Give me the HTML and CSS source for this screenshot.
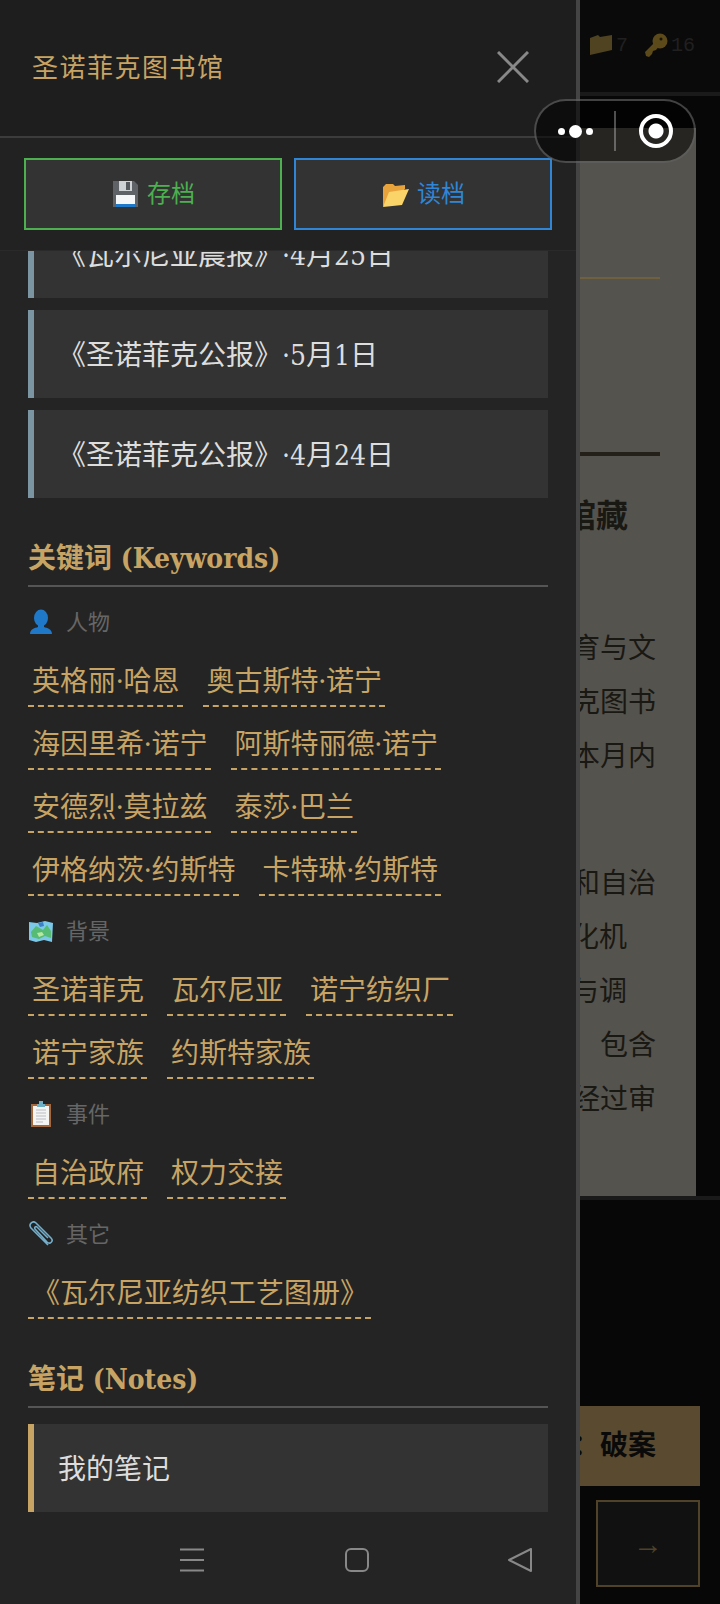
FILE: index.html
```html
<!DOCTYPE html>
<html lang="zh-CN">
<head>
  <meta charset="UTF-8" />
  <meta name="viewport" content="width=device-width, initial-scale=1" />
  <title>圣诺菲克图书馆</title>
  <link rel="stylesheet" href="styles.css">
</head>
<body>

<!-- Page behind the drawer, dimmed -->
<div class="game">
  <div class="topbar">
    <svg class="stat-icon" width="24" height="22" viewBox="0 0 24 22"><path d="M1 4l8-3 2 2 12-2v15L1 21z" fill="#4f4322"/></svg>
    <span class="stat">7</span>
    <svg class="stat-icon stat-key" width="24" height="24" viewBox="0 0 24 24"><circle cx="16" cy="8" r="7.5" fill="#5c4a1a"/><path d="M11 9L1 19l1 4 3 1 3-3 1-3 3-1 4-5z" fill="#5c4a1a"/><circle cx="17" cy="6" r="1.5" fill="#1a1508"/></svg>
    <span class="stat">16</span>
  </div>
  <div class="paper">
    <div class="rule rule-thin"></div>
    <div class="rule rule-thick"></div>
    <h2 class="paper-title">图书馆馆藏</h2>
    <div class="paper-block">
      <div class="line">育与文</div>
      <div class="line">克图书</div>
      <div class="line">本月内</div>
    </div>
    <div class="paper-block paper-block-second">
      <div class="line">和自治</div>
      <div class="line line-short">化机</div>
      <div class="line line-short">与调</div>
      <div class="line">包含</div>
      <div class="line">经过审</div>
    </div>
  </div>
  <div class="game-footer">
    <button class="solve-btn">线索：破案</button>
    <button class="next-btn">→</button>
  </div>
</div>

<aside class="drawer">
  <header class="drawer-head">
    <span class="drawer-title">圣诺菲克图书馆</span>
    <svg class="drawer-close" width="32" height="32" viewBox="0 0 32 32"><path d="M1 1l30 30M31 1L1 31" stroke="#888" stroke-width="3" fill="none"/></svg>
  </header>

  <div class="save-bar">
    <button class="save-btn save-btn-green">
      <svg width="28" height="28" viewBox="0 0 28 28"><path d="M2 1h21l4 4v22H2z" fill="#5f6368"/><path d="M8 1h13v10H8z" fill="#cfd2d5"/><path d="M15 2h4v8h-4z" fill="#55595e"/><path d="M5 15h19v12H5z" fill="#f5f6f7"/><path d="M5 24h19v3H5z" fill="#1f78c8"/></svg>
      <span class="save-label">存档</span>
    </button>
    <button class="save-btn save-btn-blue">
      <svg width="28" height="28" viewBox="0 0 28 28"><path d="M2 7l3-3h7l2 2 10-1v4L5 25l-3 1z" fill="#e8a33d"/><path d="M8 12l20-3-7 16-19 2z" fill="#fbd469"/></svg>
      <span class="save-label">读档</span>
    </button>
  </div>

  <div class="drawer-scroll">
    <div class="drawer-inner">
      <div class="entry">《瓦尔尼亚晨报》·4月25日</div>
      <div class="entry">《圣诺菲克公报》·5月1日</div>
      <div class="entry">《圣诺菲克公报》·4月24日</div>

      <h3 class="section-title">关键词 (Keywords)</h3>

      <div class="cat">
        <svg width="26" height="26" viewBox="0 0 26 26"><ellipse cx="13" cy="9" rx="7" ry="8.5" fill="#1f78c8"/><path d="M2 25c0-5 5-6 8-7v-3h6v3c3 1 8 2 8 7z" fill="#1f78c8"/></svg>
        <span>人物</span>
      </div>
      <div class="tags">
        <a class="tag">英格丽·哈恩</a>
        <a class="tag">奥古斯特·诺宁</a>
        <a class="tag">海因里希·诺宁</a>
        <a class="tag">阿斯特丽德·诺宁</a>
        <a class="tag">安德烈·莫拉兹</a>
        <a class="tag">泰莎·巴兰</a>
        <a class="tag">伊格纳茨·约斯特</a>
        <a class="tag">卡特琳·约斯特</a>
      </div>

      <div class="cat">
        <svg width="26" height="26" viewBox="0 0 26 26"><path d="M1 4l8 1 8-2 8 2-1 19-8-2-8 2-7-2z" fill="#7cc8e8"/><path d="M3 14l5-6 7 4 4-5 4 6v7l-6-2-6 3-7-2z" fill="#55bb75"/><path d="M10 5l5-1 1 4-4 1z" fill="#3d7fc4"/><path d="M9 15l5-1 2 3-5 2z" fill="#b9e6a0"/></svg>
        <span>背景</span>
      </div>
      <div class="tags">
        <a class="tag">圣诺菲克</a>
        <a class="tag">瓦尔尼亚</a>
        <a class="tag">诺宁纺织厂</a>
        <a class="tag">诺宁家族</a>
        <a class="tag">约斯特家族</a>
      </div>

      <div class="cat">
        <svg width="26" height="26" viewBox="0 0 26 26"><path d="M3 3h20v23H3z" fill="#a5683c"/><path d="M5 5h16v19H5z" fill="#f4f4f2"/><path d="M8 9h10M8 12h10M8 15h10M8 18h10M8 21h7" stroke="#b8bcc4" stroke-width="1"/><path d="M9 3h8v3H9zM11 0h4v3h-4z" fill="#6fb0c4"/></svg>
        <span>事件</span>
      </div>
      <div class="tags">
        <a class="tag">自治政府</a>
        <a class="tag">权力交接</a>
      </div>

      <div class="cat">
        <svg width="26" height="26" viewBox="0 0 26 26"><path d="M20 24L3 7c-3-4 2-8 5-5l15 15c3 3-1 7-4 4L7 8c-1-2 1-3 2-2l11 11" fill="none" stroke="#74aecb" stroke-width="1.6"/></svg>
        <span>其它</span>
      </div>
      <div class="tags">
        <a class="tag">《瓦尔尼亚纺织工艺图册》</a>
      </div>

      <h3 class="section-title">笔记 (Notes)</h3>
      <div class="entry entry-note">我的笔记</div>
    </div>
  </div>
</aside>

<!-- Mini program capsule -->
<div class="capsule">
  <div class="capsule-dots"><i></i><b></b><i></i></div>
  <div class="capsule-sep"></div>
  <div class="capsule-target"></div>
</div>

<!-- System navigation -->
<div class="navbar">
  <svg width="26" height="24" viewBox="0 0 26 24"><path d="M1 1.5h24M1 12h24M1 22.5h24" stroke="#888" stroke-width="2" fill="none"/></svg>
  <svg width="24" height="24" viewBox="0 0 24 24"><rect x="1" y="1" width="22" height="22" rx="5" stroke="#888" stroke-width="2" fill="none"/></svg>
  <svg width="24" height="24" viewBox="0 0 24 24"><path d="M23 1v22L1 12z" stroke="#888" stroke-width="2" stroke-linejoin="round" fill="none"/></svg>
</div>

</body>
</html>
```

FILE: styles.css
```css
* {
  box-sizing: border-box;
}
body {
  margin: 0;
  width: 720px;
  height: 1604px;
  position: relative;
  overflow: hidden;
  background: #070707;
  font-family: "DejaVu Serif Condensed", "Noto Sans CJK SC", serif;
  text-spacing-trim: space-all;
  text-autospace: no-autospace;
}

/* page behind */
.game {
  height: 1604px;
  display: flex;
  flex-direction: column;
}
.topbar {
  height: 96px;
  padding: 0 25px 2px 0;
  display: flex;
  justify-content: flex-end;
  align-items: center;
  background: #0a0a0a;
  border-bottom: 4px solid #1a1a1a;
}
.stat {
  font-family: "Liberation Mono", monospace;
  font-size: 20px;
  color: #202020;
  margin-left: 3px;
}
.stat-key {
  margin-left: 16px;
}
.paper {
  margin: 32px 24px 0;
  height: 1068px;
  padding-right: 36px;
  background: #55534d;
  color: #1a1813;
  flex-shrink: 0;
}
.rule {
  margin-left: auto;
  width: 300px;
}
.rule-thin {
  height: 2px;
  margin-top: 149px;
  background: #6f6040;
}
.rule-thick {
  height: 4px;
  margin-top: 173px;
  background: #23201a;
}
.paper-title {
  margin: 33px 32px 0 0;
  text-align: right;
  font-size: 32px;
  line-height: 48px;
  font-weight: 700;
  font-family: "Noto Sans CJK SC", sans-serif;
}
.paper-block {
  margin-top: 82px;
  padding-right: 4px;
  font-family: "Noto Sans CJK SC", sans-serif;
  font-size: 28px;
  line-height: 54px;
  text-align: right;
}
.paper-block-second {
  margin-top: 73px;
}
.line-short {
  padding-right: 29px;
}
.game-footer {
  flex-grow: 1;
  border-top: 4px solid #1a1a1a;
  padding: 206px 20px 0 0;
  display: flex;
  flex-direction: column;
  align-items: flex-end;
  gap: 14px;
}
.solve-btn {
  width: 300px;
  height: 80px;
  border: none;
  padding: 0 44px 6px 0;
  text-align: right;
  background: #5a4a30;
  color: #0a0a0a;
  font-size: 28px;
  font-weight: 700;
  font-family: "Noto Sans CJK TC", sans-serif;
}
.next-btn {
  width: 104px;
  height: 87px;
  border: 2px solid #4f4229;
  background: #111;
  color: #4f4229;
  font-size: 30px;
  padding: 0;
}

/* drawer */
.drawer {
  position: absolute;
  left: 0;
  top: 0;
  width: 580px;
  height: 1604px;
  display: flex;
  flex-direction: column;
  background: #242424;
  border-right: 4px solid #444;
}
.drawer-head {
  height: 138px;
  padding: 0 47px 2px 32px;
  flex-shrink: 0;
  display: flex;
  justify-content: space-between;
  align-items: center;
  background: #1e1e1e;
  border-bottom: 2px solid #3c3c3c;
}
.drawer-title {
  font-family: "Noto Sans CJK SC", sans-serif;
  font-size: 26px;
  letter-spacing: 1.5px;
  margin-bottom: 4px;
  color: #c8a464;
}
.save-bar {
  height: 112px;
  padding: 20px 24px;
  flex-shrink: 0;
  display: flex;
  gap: 12px;
  background: #222;
  box-shadow: 0 1px 0 #2a2a2a;
  position: relative;
}
.save-btn {
  flex: 1;
  height: 72px;
  background: #333;
  font-family: "Noto Sans CJK SC", sans-serif;
  font-size: 24px;
  display: flex;
  align-items: center;
  justify-content: center;
  gap: 8px;
  padding: 0;
}
.save-label {
  margin-bottom: 6px;
}
.save-btn-green {
  border: 2px solid #4caf50;
  color: #4caf50;
}
.save-btn-blue {
  border: 2px solid #2f86d6;
  color: #2f86d6;
}
.drawer-scroll {
  flex-grow: 1;
  overflow: hidden;
}
.drawer-inner {
  margin-top: -40px;
  padding: 0 28px;
}
.entry {
  height: 88px;
  margin-bottom: 12px;
  padding: 0 24px 2px;
  display: flex;
  align-items: center;
  background: #333;
  border-left: 6px solid #7b95a3;
  color: #ddd;
  font-size: 28px;
}
.entry-note {
  border-left-color: #c8a464;
  margin-top: 16px;
}
.section-title {
  margin: 38px 0 0;
  height: 51px;
  padding-top: 2px;
  line-height: 42px;
  font-size: 28px;
  font-weight: 700;
  color: #c8a464;
  border-bottom: 2px solid #555;
}
.cat {
  margin-top: 20px;
  height: 30px;
  display: flex;
  align-items: center;
  gap: 12px;
  font-family: "Noto Sans CJK SC", sans-serif;
  font-size: 22px;
  color: #666;
}
.cat span {
  margin-bottom: 4px;
}
.tags {
  margin-top: 22px;
  display: flex;
  flex-wrap: wrap;
  gap: 15px 20px;
}
.tag {
  padding: 0 3px 4px 4px;
  line-height: 42px;
  font-family: "Noto Sans", "Noto Sans CJK SC", sans-serif;
  font-size: 28px;
  color: #c8a464;
  border-bottom: 2px dashed #c8a464;
}

/* overlays */
.capsule {
  position: absolute;
  left: 534px;
  top: 99px;
  width: 162px;
  height: 64px;
  display: flex;
  align-items: center;
  border-radius: 32px;
  border: 2px solid rgba(255,255,255,0.25);
  background: rgba(0,0,0,0.55);
}
.capsule-dots {
  width: 78px;
  display: flex;
  justify-content: center;
  align-items: center;
  gap: 4px;
}
.capsule-dots i {
  width: 7px;
  height: 7px;
  border-radius: 50%;
  background: #fff;
}
.capsule-dots b {
  width: 13px;
  height: 13px;
  border-radius: 50%;
  background: #fff;
}
.capsule-sep {
  width: 2px;
  height: 40px;
  background: rgba(255,255,255,0.3);
}
.capsule-target {
  margin-left: 23px;
  width: 34px;
  height: 34px;
  border-radius: 50%;
  border: 4px solid #fff;
  background: radial-gradient(circle, #fff 0 7px, transparent 8px);
}
.navbar {
  position: absolute;
  left: 0;
  top: 1548px;
  width: 580px;
  padding: 0 48px 0 179px;
  display: flex;
  justify-content: space-between;
}
```
